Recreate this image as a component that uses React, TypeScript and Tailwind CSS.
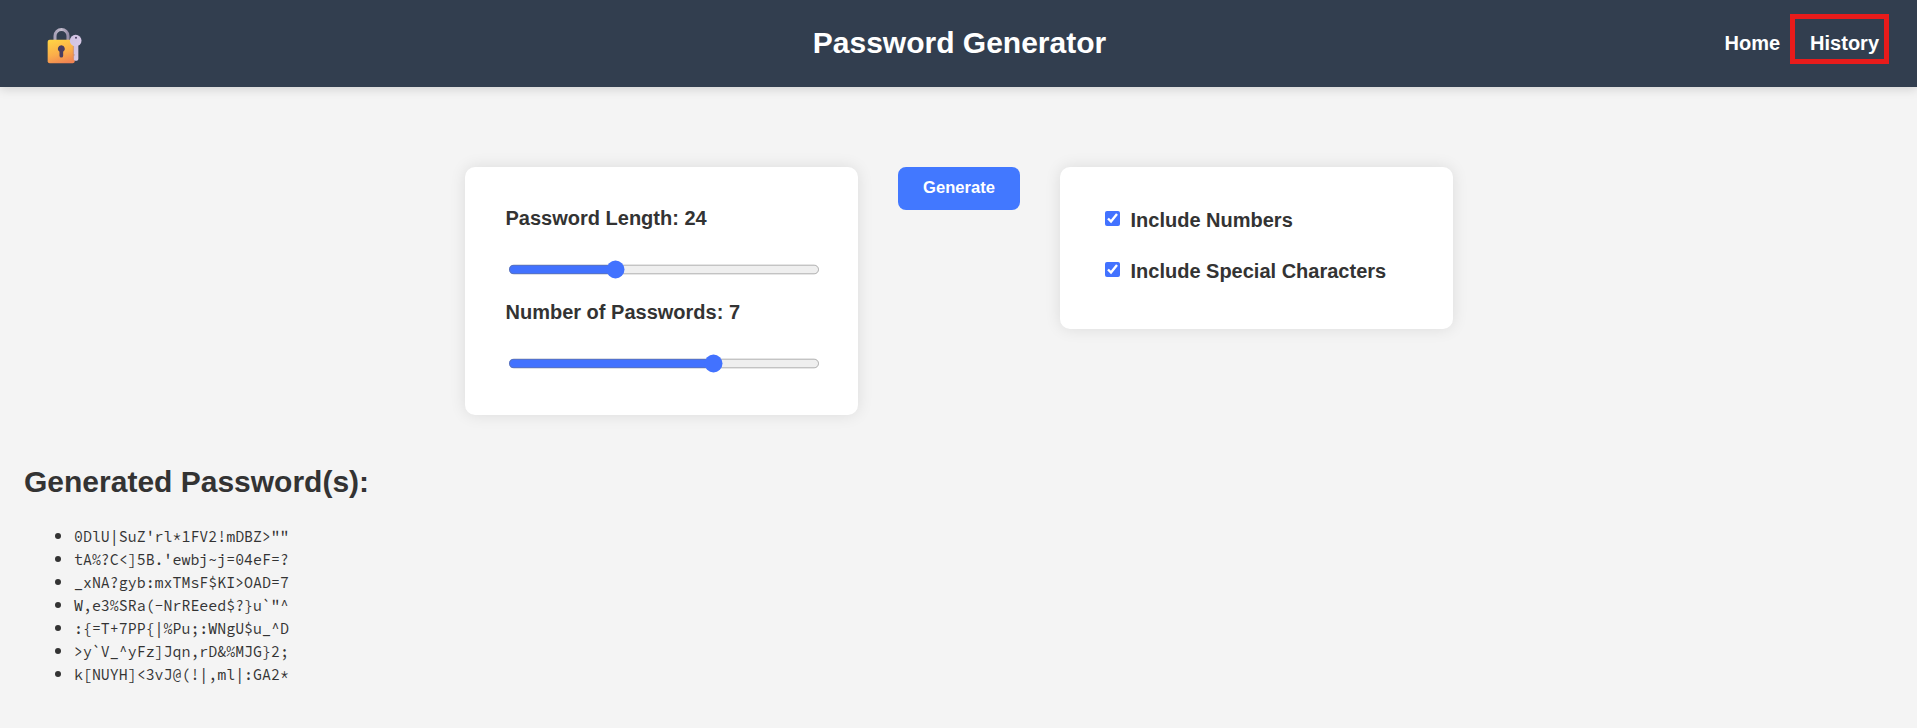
import { useState } from 'react';

const passwords = [
  `0DlU|SuZ'rl*1FV2!mDBZ>""`,
  `tA%?C<]5B.'ewbj~j=04eF=?`,
  `_xNA?gyb:mxTMsF$KI>OAD=7`,
  'W,e3%SRa(-NrREeed$?}u`"^',
  `:{=T+7PP{|%Pu;:WNgU$u_^D`,
  '>y`V_^yFz]Jqn,rD&%MJG}2;',
  `k[NUYH]<3vJ@(!|,ml|:GA2*`,
];

function LockLogo() {
  return (
    <svg width="36" height="36" viewBox="50 37 108 108" aria-hidden="true">
      <defs>
        <linearGradient id="body" x1="0.3" y1="0" x2="0.65" y2="1">
          <stop offset="0" stopColor="#ffd044" />
          <stop offset="0.55" stopColor="#fbae4a" />
          <stop offset="1" stopColor="#f08352" />
        </linearGradient>
        <linearGradient id="shackle" x1="0" y1="0" x2="1" y2="0">
          <stop offset="0" stopColor="#a9a2b8" />
          <stop offset="0.5" stopColor="#c3bccd" />
          <stop offset="1" stopColor="#958da6" />
        </linearGradient>
        <linearGradient id="key" x1="0" y1="0" x2="1" y2="1">
          <stop offset="0" stopColor="#cfc0e2" />
          <stop offset="1" stopColor="#d9cbe8" />
        </linearGradient>
      </defs>
      <path d="M74 76V61a19.5 19.5 0 0 1 39 0v15" fill="none" stroke="url(#shackle)" strokeWidth="9" />
      <rect x="52" y="72" width="81" height="71" rx="6" fill="url(#body)" />
      <path d="M93 89a10.500 10.500 0 0 0-5.500 19.500V120a5.500 5.500 0 0 0 11 0v-11.500A10.500 10.500 0 0 0 93 89Z" fill="#493c60" />
      <path d="M130 90h14v40a5 5 0 0 1-5 5h-6l-3-4v-10l3-3-3-4Z" fill="url(#key)" />
      <circle cx="136" cy="75" r="17.500" fill="url(#key)" />
      <path d="M129 91v40" stroke="#c28b78" strokeWidth="2" />
      <circle cx="137" cy="66" r="3" fill="#493c60" />
    </svg>
  );
}

interface SliderProps {
  label: string;
  min: number;
  max: number;
  initial: number;
}

function Slider({ label, min, max, initial }: SliderProps) {
  const [value, setValue] = useState(initial);
  return (
    <label className="flex h-[94px] flex-col text-xl leading-[23px] font-bold">
      <span className="pl-px">
        {label}: {value}
      </span>
      <input
        type="range"
        min={min}
        max={max}
        value={value}
        onChange={(e) => setValue(Number(e.target.value))}
        className="mt-[25px] ml-[3.33px] h-[16px] w-[260px] accent-[#4272ff] [zoom:1.2]"
      />
    </label>
  );
}

function Check({ label }: { label: string }) {
  return (
    <label className="flex h-[51px] items-start text-xl leading-[23px] font-bold">
      <input type="checkbox" defaultChecked className="mt-[3px] mr-[11px] h-[15px] w-[15px] accent-[#4272ff]" />
      <span className="pt-px">{label}</span>
    </label>
  );
}

const card = 'w-[393px] rounded-[10px] bg-white shadow-[0_0_16px_rgba(0,0,0,0.1)]';

export default function App() {
  return (
    <div className="min-h-screen bg-[#f4f4f4] font-['Liberation_Sans',Arial,sans-serif] text-[#333]">
      <header className="grid h-[87px] grid-cols-3 items-center bg-[#323e4f] pr-[38px] pl-[46px] text-white shadow-[0_2px_10px_rgba(0,0,0,0.15)]">
        <div className="pt-[4px] pl-px">
          <LockLogo />
        </div>
        <h1 className="pr-[6px] pb-[2px] text-center text-[30px] leading-[36px] font-bold">Password Generator</h1>
        <nav className="flex justify-end gap-[30px] pb-[2px] text-xl leading-[24px] font-bold">
          <a href="#home">Home</a>
          <a href="#history" className="relative">
            History
            <span className="absolute -top-[17px] -left-[20px] h-[50px] w-[99px] border-[5px] border-[#e81b1b]" />
          </a>
        </nav>
      </header>

      <main>
        <section className="flex items-start justify-center gap-[40px] pt-[80px]">
          <div className={`${card} h-[248px] px-[40px] pt-[40px]`}>
            <Slider label="Password Length" min={4} max={64} initial={24} />
            <Slider label="Number of Passwords" min={1} max={10} initial={7} />
          </div>
          <button className="h-[43px] w-[122px] rounded-[8px] bg-[#4278ff] pl-px text-[16.6px] font-bold text-white">
            Generate
          </button>
          <div className={`${card} h-[162px] pt-[41px] pl-[45px]`}>
            <Check label="Include Numbers" />
            <Check label="Include Special Characters" />
          </div>
        </section>

        <section className="px-[24px] pt-[49px]">
          <h2 className="text-[30px] leading-[36px] font-bold">Generated Password(s):</h2>
          <ul className="mt-[24px] list-disc pl-[50px] text-[20px] leading-[23px]">
            {passwords.map((password) => (
              <li key={password} className="h-[23px]">
                <code className="block font-['Source_Code_Pro','Liberation_Mono',monospace] text-[14.93px] leading-[23px]">
                  {password}
                </code>
              </li>
            ))}
          </ul>
        </section>
      </main>
    </div>
  );
}
